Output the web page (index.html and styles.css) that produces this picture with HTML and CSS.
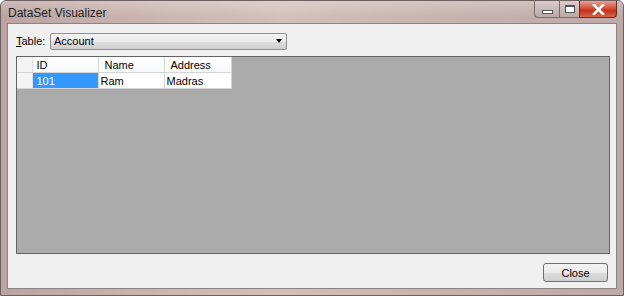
FILE: index.html
```html
<!DOCTYPE html>
<html lang="en">
<head>
    <meta charset="UTF-8">
    <title>DataSet Visualizer</title>
    <link rel="stylesheet" href="styles.css">
</head>
<body>
    <div class="window">
        <div class="titlebar">
            <span class="title">DataSet Visualizer</span>
            <div class="controls">
                <span class="ctl min"><span class="min-bar"></span></span>
                <span class="ctl max"><span class="max-box"></span></span>
                <span class="ctl close">
                    <svg width="13" height="11" viewBox="0 0 13 11">
                        <path d="M2 1 L11 10 M11 1 L2 10" stroke="#fff" stroke-width="2.6" stroke-linecap="square"/>
                    </svg>
                </span>
            </div>
        </div>

        <div class="client">
            <div class="picker">
                <label class="label"><u>T</u>able:</label>
                <div class="combo">
                    <span>Account</span>
                    <span class="arrow"></span>
                </div>
            </div>

            <div class="grid">
                <table>
                    <colgroup>
                        <col class="c-head">
                        <col class="c-id">
                        <col class="c-name">
                        <col class="c-addr">
                    </colgroup>
                    <thead>
                        <tr>
                            <th class="rowhead"></th>
                            <th>ID</th>
                            <th>Name</th>
                            <th>Address</th>
                        </tr>
                    </thead>
                    <tbody>
                        <tr>
                            <td class="rowhead"></td>
                            <td class="selected">101</td>
                            <td>Ram</td>
                            <td>Madras</td>
                        </tr>
                    </tbody>
                </table>
            </div>

            <div class="footer">
                <button class="btn">Close</button>
            </div>
        </div>
    </div>
</body>
</html>
```

FILE: styles.css
```css
body {
    margin: 0;
    font-family: "Liberation Sans", Arial, sans-serif;
    font-size: 11px;
}
.window {
    width: 624px;
    height: 296px;
    box-sizing: border-box;
    display: flex;
    flex-direction: column;
    background: linear-gradient(90deg, #b9a4a3 0%, #c9b2ad 20%, #d3c0bb 45%, #c8b3ae 70%, #bca9a8 100%);
    border: 1px solid #6e5f60;
    border-radius: 6px 6px 0 0;
}
.titlebar {
    height: 23px;
    display: flex;
    justify-content: space-between;
    align-items: flex-start;
    padding-left: 7px;
    background: linear-gradient(180deg, rgba(255,255,255,0.25), rgba(255,255,255,0) 70%);
}
.title {
    font-size: 12px;
    color: #1e1e1e;
    margin-top: 5px;
}
.controls {
    display: flex;
    margin-right: 6px;
}
.ctl {
    height: 17px;
    display: flex;
    align-items: center;
    justify-content: center;
    box-sizing: border-box;
    border: 1px solid #7a6b6c;
    border-top: none;
}
.min {
    width: 25px;
    border-radius: 0 0 0 4px;
    border-right: none;
    background: linear-gradient(180deg, #d8cccb, #b9a9a8);
}
.max {
    width: 20px;
    border-right: none;
    background: linear-gradient(180deg, #d8cccb, #b9a9a8);
}
.close {
    width: 38px;
    border-radius: 0 0 4px 0;
    border-color: #6b2a20;
    background: linear-gradient(180deg, #e8a394 0%, #d5513b 45%, #c3321c 60%, #d9634b 100%);
}
.min-bar {
    width: 9px;
    height: 2px;
    margin-top: 6px;
    background: #fff;
    border: 1px solid #555;
}
.max-box {
    width: 8px;
    height: 5px;
    border: 1px solid #555;
    border-top-width: 2px;
    background: #fff;
}
.client {
    flex: 1;
    margin: 0 6px 6px 6px;
    background: #f0f0f0;
    border: 1px solid #8f8283;
    display: flex;
    flex-direction: column;
    padding: 8px 6px 6px 8px;
}
.picker {
    display: flex;
    align-items: center;
    gap: 7px;
    height: 18px;
}
.label {
    color: #000;
    width: 27px;
}
.combo {
    width: 237px;
    height: 17px;
    box-sizing: border-box;
    border: 1px solid #8e8f8f;
    border-radius: 2px;
    background: linear-gradient(180deg, #f4f4f4 0%, #ebebeb 50%, #dddddd 51%, #cfcfcf 100%);
    display: flex;
    align-items: center;
    justify-content: space-between;
    padding: 0 4px 0 3px;
}
.arrow {
    width: 0;
    height: 0;
    border-left: 3.5px solid transparent;
    border-right: 3.5px solid transparent;
    border-top: 4px solid #000;
}
.grid {
    margin-top: 6px;
    height: 198px;
    box-sizing: border-box;
    border: 1px solid #646464;
    background: #ababab;
}
table {
    border-collapse: collapse;
    table-layout: fixed;
    width: 214px;
}
.c-head { width: 15px; }
.c-id { width: 66px; }
.c-name { width: 66px; }
.c-addr { width: 67px; }
th, td {
    height: 15px;
    padding: 0 0 0 4px;
    text-align: left;
    font-weight: normal;
    border: 1px solid #d5d5d5;
    border-top: none;
    border-left: none;
    background: #fff;
    color: #000;
    white-space: nowrap;
    overflow: hidden;
}
th {
    background: linear-gradient(180deg, #ffffff, #f7f8fa);
}
th:nth-child(3),
th:nth-child(4) {
    padding-left: 6px;
}
td:nth-child(3),
td:nth-child(4) {
    padding-left: 2px;
}
.rowhead {
    padding: 0;
    background: #f4f4f4;
    border-right: 1px solid #e0e0e0;
}
td.selected {
    background: #3399ff;
    color: #fff;
}
.footer {
    display: flex;
    justify-content: flex-end;
    margin-top: 9px;
    padding-right: 2px;
}
.btn {
    width: 65px;
    height: 19px;
    font-family: "Liberation Sans", Arial, sans-serif;
    font-size: 11px;
    color: #000;
    border: 1px solid #707070;
    border-radius: 3px;
    background: linear-gradient(180deg, #f2f2f2 0%, #ebebeb 50%, #dddddd 51%, #cfcfcf 100%);
    padding: 0;
}
```
